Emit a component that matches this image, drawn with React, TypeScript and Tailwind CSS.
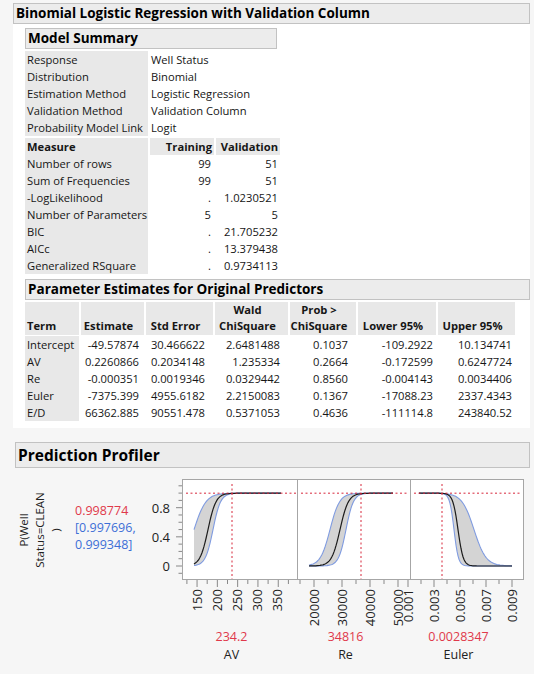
import React from 'react';

// y position (page px) for a probability value
const Y = (v: number) => 566 - v * 72.9;
const TOP = 0.9988;

type Pt = [number, number];

function logistic(x0: number, x1: number, mid: number, s: number, dir: number): Pt[] {
  const pts: Pt[] = [];
  for (let x = x0; x <= x1 + 0.01; x += 1) {
    const v = TOP / (1 + Math.exp((-dir * (x - mid)) / s));
    pts.push([x, Y(v)]);
  }
  return pts;
}

const path = (pts: Pt[]) => 'M' + pts.map((p) => `${p[0].toFixed(1)},${p[1].toFixed(1)}`).join(' L');

const panels = [
  {
    left: 182, right: 297, d0: 194, d1: 281, dir: 1, cur: 232,
    mid: { m: 208, s: 4 }, a: { m: 194, s: 6 }, b: { m: 213, s: 3.8 },
    ticks: { first: 186.9, step: 10.15, n: 11, majorEvery: 2, majorOffset: 1 },
    labels: [['150', 197], ['200', 217], ['250', 237], ['300', 257], ['350', 277]] as [string, number][],
  },
  {
    left: 297, right: 410, d0: 309, d1: 393, dir: 1, cur: 361,
    mid: { m: 340, s: 4.2 }, a: { m: 330, s: 4.8 }, b: { m: 346, s: 3.7 },
    ticks: { first: 300, step: 14, n: 8, majorEvery: 2, majorOffset: 1 },
    labels: [['20000', 314], ['30000', 342], ['40000', 370], ['50000', 398]] as [string, number][],
  },
  {
    left: 410, right: 523, d0: 419, d1: 512, dir: -1, cur: 442,
    mid: { m: 458, s: 2.6 }, a: { m: 454, s: 2.2 }, b: { m: 474, s: 6 },
    ticks: { first: 408, step: 13, n: 9, majorEvery: 2, majorOffset: 0 },
    labels: [['0.001', 408], ['0.003', 434], ['0.005', 460], ['0.007', 486], ['0.009', 512]] as [string, number][],
  },
];

function Profiler() {
  const yTicks: number[] = [];
  for (let i = -1; i <= 11; i++) yTicks.push(i / 10);
  return (
    <svg width={380} height={160} className="block">
      <g transform="translate(-150,-468)">
        {/* y axis ticks */}
        {yTicks.map((v) => {
          const major = Math.abs(v) < 0.001 || Math.abs(v - 0.4) < 0.001 || Math.abs(v - 0.8) < 0.001;
          return <line key={v} x1={major ? 176 : 178.5} x2={182} y1={Y(v)} y2={Y(v)} stroke="#888" strokeWidth={1} />;
        })}
        {[['0.8', 0.8], ['0.4', 0.4], ['0', 0]].map(([t, v]) => (
          <text key={t as string} x={170} y={Y(v as number)} textAnchor="end" dominantBaseline="central" fontSize={13} fill="#222">
            {t}
          </text>
        ))}
        {panels.map((p, i) => {
          const a = logistic(p.d0, p.d1, p.a.m, p.a.s, p.dir);
          const b = logistic(p.d0, p.d1, p.b.m, p.b.s, p.dir);
          const band = path(a) + ' L' + [...b].reverse().map((q) => `${q[0].toFixed(1)},${q[1].toFixed(1)}`).join(' L') + ' Z';
          const ticks: number[] = [];
          for (let k = 0; k < p.ticks.n; k++) ticks.push(k);
          return (
            <g key={i}>
              <rect x={p.left + 0.5} y={479.5} width={p.right - p.left} height={100} fill="#fff" stroke="#a6a6a6" />
              <path d={band} fill="#d4d4d4" stroke="none" />
              <path d={path(a)} fill="none" stroke="#7f9be0" strokeWidth={1.1} />
              <path d={path(b)} fill="none" stroke="#7f9be0" strokeWidth={1.1} />
              <path d={path(logistic(p.d0, p.d1, p.mid.m, p.mid.s, p.dir))} fill="none" stroke="#1c1c1c" strokeWidth={1.2} />
              <line x1={p.left + 4} x2={p.right - 1} y1={Y(TOP)} y2={Y(TOP)} stroke="#d7263a" strokeWidth={1} strokeDasharray="2 2.5" />
              <line x1={p.cur} x2={p.cur} y1={484} y2={579} stroke="#d7263a" strokeWidth={1} strokeDasharray="2 2.5" />
              {ticks.map((k) => {
                const x = p.ticks.first + k * p.ticks.step;
                const major = (k - p.ticks.majorOffset) % p.ticks.majorEvery === 0;
                return <line key={k} x1={x} x2={x} y1={580} y2={major ? 587 : 584} stroke="#888" strokeWidth={1} />;
              })}
              {p.labels.map(([t, x]) => (
                <text key={t} transform={`translate(${x},589) rotate(-90)`} textAnchor="end" dominantBaseline="central" fontSize={13} fill="#222">
                  {t}
                </text>
              ))}
            </g>
          );
        })}
      </g>
    </svg>
  );
}

const cell = 'h-[17px] leading-[17px] whitespace-nowrap';

export default function App() {
  const info = [
    ['Response', 'Well Status'],
    ['Distribution', 'Binomial'],
    ['Estimation Method', 'Logistic Regression'],
    ['Validation Method', 'Validation Column'],
    ['Probability Model Link', 'Logit'],
  ];
  const measures = [
    ['Number of rows', '99', '51'],
    ['Sum of Frequencies', '99', '51'],
    ['-LogLikelihood', '.', '1.0230521'],
    ['Number of Parameters', '5', '5'],
    ['BIC', '.', '21.705232'],
    ['AICc', '.', '13.379438'],
    ['Generalized RSquare', '.', '0.9734113'],
  ];
  const params = [
    ['Intercept', '-49.57874', '30.466622', '2.6481488', '0.1037', '-109.2922', '10.134741'],
    ['AV', '0.2260866', '0.2034148', '1.235334', '0.2664', '-0.172599', '0.6247724'],
    ['Re', '-0.000351', '0.0019346', '0.0329442', '0.8560', '-0.004143', '0.0034406'],
    ['Euler', '-7375.399', '4955.6182', '2.2150083', '0.1367', '-17088.23', '2337.4343'],
    ['E/D', '66362.885', '90551.478', '0.5371053', '0.4636', '-111114.8', '243840.52'],
  ];
  const cols = ['w-[54px]', 'w-[63px]', 'w-[67px]', 'w-[73px]', 'w-[66px]', 'w-[78px]', 'w-[77px]'];
  const valPad = ['', 'pr-[5px]', 'pr-[8px]', 'pr-[8px]', 'pr-[8px]', 'pr-[3px]', 'pr-[3px]'];

  return (
    <div className="w-[534px] h-[674px] overflow-hidden bg-[#f6f6f6] font-['Open_Sans',sans-serif] text-[11.2px] text-[#161616]">
      <div className="pt-[3px] pl-[13px] pr-[4px]">
        <div className="h-[21px] border border-[#c2c2c2] bg-[#ececec] pl-[2px] text-[13.5px] font-bold leading-[19px] text-black">
          Binomial Logistic Regression with Validation Column
        </div>
        <div className="h-[404px] bg-white pl-[12px] pt-[4px]">
          <div className="w-[252px] h-[21px] border border-[#c2c2c2] bg-[#ececec] pl-[2px] text-[13.5px] font-bold leading-[19px] text-black">
            Model Summary
          </div>
          <div className="mt-[2px]">
            {info.map(([k, v]) => (
              <div key={k} className="flex">
                <div className={`${cell} w-[123px] bg-[#e8e8e8] pl-[2px]`}>{k}</div>
                <div className={`${cell} ml-[2px] pl-[1px]`}>{v}</div>
              </div>
            ))}
          </div>
          <div className="mt-[2px] flex gap-[2px] font-bold">
            <div className={`${cell} w-[123px] bg-[#e8e8e8] pl-[2px]`}>Measure</div>
            <div className={`${cell} w-[64px] bg-[#e8e8e8] pr-[2px] text-right`}>Training</div>
            <div className={`${cell} w-[64px] bg-[#e8e8e8] pr-[2px] text-right`}>Validation</div>
          </div>
          {measures.map(([k, t, v]) => (
            <div key={k} className="flex gap-[2px]">
              <div className={`${cell} w-[123px] bg-[#e8e8e8] pl-[2px]`}>{k}</div>
              <div className={`${cell} w-[64px] pr-[3px] text-right`}>{t}</div>
              <div className={`${cell} w-[64px] pr-[2px] text-right`}>{v}</div>
            </div>
          ))}

          <div className="mt-[5px] h-[21px] border border-[#c2c2c2] bg-[#ececec] pl-[2px] text-[13.5px] font-bold leading-[19px] text-black">
            Parameter Estimates for Original Predictors
          </div>
          <div className="mt-[2px] flex gap-[2px] font-bold">
            {['Term', 'Estimate', 'Std Error', 'Wald\nChiSquare', 'Prob >\nChiSquare', 'Lower 95%', 'Upper 95%'].map((h, i) => (
              <div
                key={h}
                className={`${cols[i]} h-[33px] bg-[#e8e8e8] flex items-end whitespace-pre-line leading-[16px] pb-[1px] ${
                  i === 0 ? 'pl-[2px]' : 'justify-center text-center pr-[8px]'
                }`}
              >
                {h}
              </div>
            ))}
          </div>
          <div className="mt-[1px]">
            {params.map((r) => (
              <div key={r[0]} className="flex gap-[2px]">
                {r.map((c, i) => (
                  <div
                    key={i}
                    className={`${cell} ${cols[i]} ${i === 0 ? 'bg-[#e8e8e8] pl-[2px]' : `text-right ${valPad[i]}`}`}
                  >
                    {c}
                  </div>
                ))}
              </div>
            ))}
          </div>
        </div>
      </div>

      <div className="mt-[14px] pl-[15px] pr-[4px]">
        <div className="h-[26px] border border-[#c2c2c2] bg-[#ececec] pl-[2px] text-[15.5px] font-bold leading-[24px] text-black">
          Prediction Profiler
        </div>
        <div className="flex">
          <div className="w-[135px] flex">
            <div className="w-[50px] h-[124px] flex items-center justify-center">
              <div className="-rotate-90 whitespace-nowrap text-center text-[11.5px] leading-[16px] text-[#222]">
                <div>P(Well</div>
                <div>Status=CLEAN</div>
                <div>)</div>
              </div>
            </div>
            <div className="ml-[10px] pt-[34px] text-[12.5px] leading-[17px]">
              <div className="text-[#e0394b]">0.998774</div>
              <div className="text-[#3d6fd6]">[0.997696,</div>
              <div className="text-[#3d6fd6]">0.999348]</div>
            </div>
          </div>
          <Profiler />
        </div>
        <div className="ml-[159px] flex text-[12.5px] leading-[18px] text-center">
          <div className="w-[115px]">
            <div className="text-[#e0394b]">234.2</div>
            <div className="text-[#222]">AV</div>
          </div>
          <div className="w-[113px]">
            <div className="text-[#e0394b]">34816</div>
            <div className="text-[#222]">Re</div>
          </div>
          <div className="w-[113px]">
            <div className="text-[#e0394b]">0.0028347</div>
            <div className="text-[#222]">Euler</div>
          </div>
        </div>
      </div>
    </div>
  );
}
